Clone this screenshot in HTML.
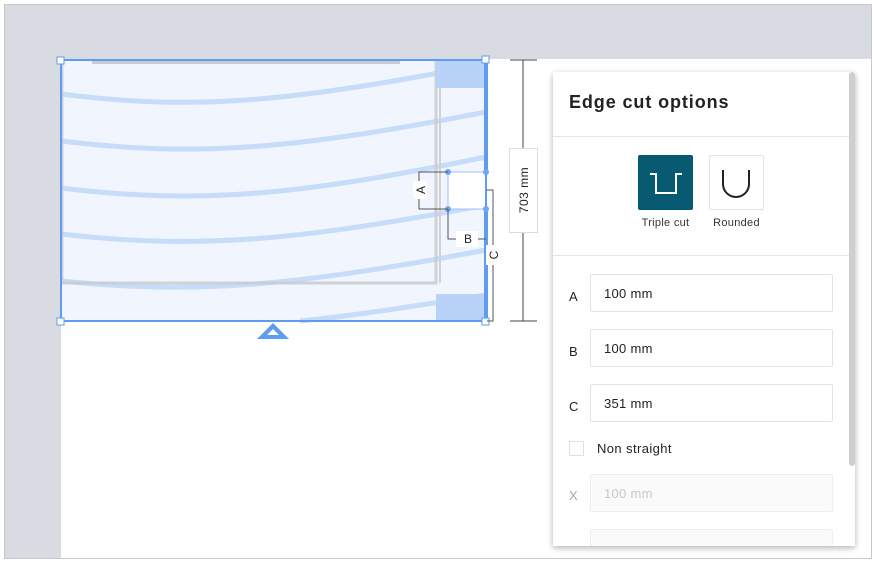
<!DOCTYPE html>
<html><head><meta charset="utf-8"><style>
*{box-sizing:border-box;margin:0;padding:0}
body{width:875px;height:562px;background:#fff;position:relative;overflow:hidden;font-family:"Liberation Sans",sans-serif}
.abs{position:absolute}
.inp{position:absolute;left:590px;width:243px;height:38px;border:1px solid #e3e3e3;border-radius:2px;font-size:13px;color:#222;padding:11px 0 0 13px;letter-spacing:.3px}
.lbl{position:absolute;left:569px;font-size:13px;color:#222}
</style></head><body>
<div class="abs" style="left:4px;top:4px;width:868px;height:555px;border:1px solid #c8c8c8;background:#fff"></div>
<div class="abs" style="left:5px;top:5px;width:866px;height:54px;background:#d8dce2"></div>
<div class="abs" style="left:5px;top:5px;width:56px;height:553px;background:#d8dce2"></div>
<svg class="abs" style="left:0;top:0" width="875" height="562">
 <rect x="61" y="60" width="425" height="261" fill="#f1f5fe"/>
 <g fill="none" stroke="#c6dcfb" stroke-width="5">
  <path d="M61 94 C200 112 300 100 486 64"/>
  <path d="M61 141 C200 158 300 148 486 112"/>
  <path d="M61 188 C200 205 300 195 486 157"/>
  <path d="M61 234 C200 250 300 240 486 205"/>
  <path d="M61 281 C200 295 300 285 486 250"/>
  <path d="M300 321 C360 315 420 305 486 295"/>
 </g>
 <path d="M62 61 V283 H436 V61" fill="none" stroke="#c9cbcf" stroke-width="3" opacity="0.85"/>
 <line x1="440" y1="62" x2="440" y2="283" stroke="#d0d2d6" stroke-width="2"/>
 <path d="M92 62 H400" stroke="#c9cbcf" stroke-width="4"/>
 <rect x="436" y="61" width="50" height="27" fill="#b8d2f8"/>
 <rect x="436" y="294" width="50" height="27" fill="#b8d2f8"/>
 <rect x="448" y="172" width="38" height="37" fill="#fff" stroke="#9dc0f7"/>
 <rect x="61" y="60" width="425" height="261" fill="none" stroke="#5e9cf1" stroke-width="2"/>
 <line x1="486" y1="60" x2="486" y2="171" stroke="#5e9cf1" stroke-width="4"/>
 <line x1="486" y1="210" x2="486" y2="321" stroke="#5e9cf1" stroke-width="4"/>
 <g fill="#fff" stroke="#5e9cf1"><rect x="57" y="57" width="7" height="7"/><rect x="482" y="56" width="7" height="7"/><rect x="57" y="318" width="7" height="7"/><rect x="482" y="318" width="7" height="7"/></g>
 <g fill="#6ea6f3"><circle cx="448" cy="172" r="3"/><circle cx="448" cy="209" r="3"/><circle cx="486" cy="172" r="3"/><circle cx="486" cy="209" r="3"/></g>
 <path d="M448 172 H419 V209 H448" fill="none" stroke="#555"/>
 <rect x="413" y="181" width="14" height="18" fill="#fff"/>
 <text x="425" y="190" font-size="12" transform="rotate(-90 425 190)" text-anchor="middle" fill="#222">A</text>
 <path d="M448 209 V239 H486" fill="none" stroke="#555"/>
 <rect x="456" y="231" width="22" height="16" fill="#fff"/>
 <text x="468" y="243" font-size="12" text-anchor="middle" fill="#222">B</text>
 <path d="M487 190 H493 V321 H487" fill="none" stroke="#555"/>
 <rect x="486" y="245" width="14" height="20" fill="#fff"/>
 <text x="498" y="255" font-size="12" transform="rotate(-90 498 255)" text-anchor="middle" fill="#222">C</text>
 <path d="M510 60 H537 M523 60 V321 M510 321 H537" stroke="#444"/>
 <rect x="509.5" y="148.5" width="28" height="84" fill="#fff" stroke="#ddd"/>
 <text x="528" y="190" font-size="12" letter-spacing=".5" transform="rotate(-90 528 190)" text-anchor="middle" fill="#222">703 mm</text>
 <path d="M257 339 L273 323 L289 339 Z M267 335 L273 329 L279 335 Z" fill="#5e9cf1" fill-rule="evenodd"/>
</svg>
<div class="abs" style="left:553px;top:72px;width:302px;height:474px;background:#fff;box-shadow:0 2px 6px rgba(0,0,0,.3)">
 <div class="abs" style="left:296px;top:0;width:6px;height:394px;background:#cfcfcf;border-radius:3px"></div>
 <div class="abs" style="left:16px;top:20px;font-size:18px;font-weight:bold;color:#222;letter-spacing:.9px">Edge cut options</div>
 <div class="abs" style="left:0;top:64px;width:296px;height:1px;background:#e6e6e6"></div>
 <div class="abs" style="left:85px;top:83px;width:55px;height:55px;background:#085a73;border-radius:2px">
  <svg width="55" height="55"><path d="M12 19 H18 V38 H38 V19 H44" fill="none" stroke="#fff" stroke-width="2"/></svg></div>
 <div class="abs" style="left:156px;top:83px;width:55px;height:55px;border:1px solid #e3e3e3;border-radius:2px">
  <svg width="53" height="53"><path d="M13 14 V28 A13 13 0 0 0 39 28 V14" fill="none" stroke="#222" stroke-width="2"/></svg></div>
 <div class="abs" style="left:80px;top:145px;width:65px;text-align:center;font-size:11px;color:#333;letter-spacing:.3px">Triple cut</div>
 <div class="abs" style="left:151px;top:145px;width:65px;text-align:center;font-size:11px;color:#333;letter-spacing:.3px">Rounded</div>
 <div class="abs" style="left:0;top:183px;width:296px;height:1px;background:#e6e6e6"></div>
</div>
<div class="lbl" style="top:289px">A</div><div class="inp" style="top:274px">100 mm</div>
<div class="lbl" style="top:344px">B</div><div class="inp" style="top:329px">100 mm</div>
<div class="lbl" style="top:399px">C</div><div class="inp" style="top:384px">351 mm</div>
<div class="abs" style="left:569px;top:441px;width:15px;height:15px;border:1px solid #e0e0e0"></div>
<div class="abs" style="left:597px;top:441px;font-size:13px;color:#222;letter-spacing:.4px">Non straight</div>
<div class="lbl" style="top:488px;color:#aaa">X</div><div class="inp" style="top:474px;background:#fafafa;color:#c8c8c8;border-color:#eee">100 mm</div>
<div class="inp" style="top:529px;height:17px;background:#fafafa;border-bottom:none;border-color:#eee"></div>
</body></html>
